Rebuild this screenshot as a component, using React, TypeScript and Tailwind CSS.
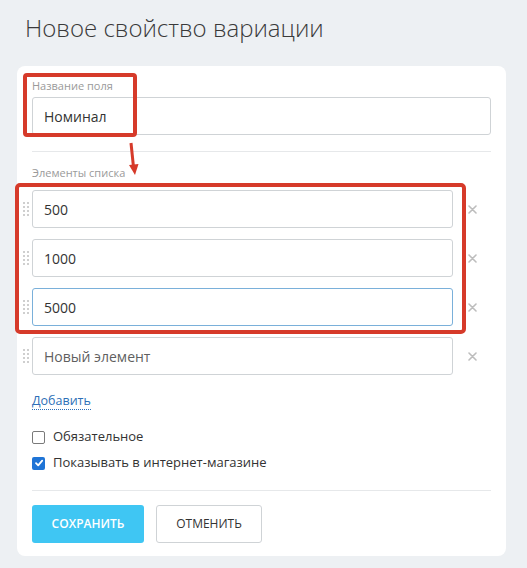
import React from "react";

const font = { fontFamily: '"Open Sans", "Noto Sans", sans-serif' };

function Handle() {
  return (
    <div className="w-[15px] flex justify-center items-center pl-[2px]">
      <div className="grid grid-cols-2 gap-x-[2px] gap-y-[2px]">
        {Array.from({ length: 8 }).map((_, i) => (
          <span key={i} className="block w-[2px] h-[2px] bg-[#cfcfcf]" />
        ))}
      </div>
    </div>
  );
}

function XIcon() {
  return (
    <div className="w-[38px] flex justify-center items-center">
      <svg width="9" height="9" viewBox="0 0 9 9">
        <path d="M1 1 L8 8 M8 1 L1 8" stroke="#bdbdbd" strokeWidth="1.6" strokeLinecap="round" />
      </svg>
    </div>
  );
}

function Item({ value, focused, placeholder }: { value?: string; focused?: boolean; placeholder?: string }) {
  return (
    <div className="flex items-stretch ml-[-15px] h-[38px]">
      <Handle />
      <div
        className={
          "flex-1 flex items-center rounded-[3px] border bg-white px-[11px] text-[14px] " +
          (focused ? "border-[#7ab0da]" : "border-[#cfd3d6]")
        }
      >
        {value ? (
          <span className="text-[#333]">{value}</span>
        ) : (
          <span className="text-[#5f5f5f]">{placeholder}</span>
        )}
      </div>
      <XIcon />
    </div>
  );
}

export default function App() {
  return (
    <div className="relative w-[527px] h-[568px] bg-[#edf0f3] overflow-hidden" style={font}>
      <div className="pt-[12px] pl-[25px] text-[24px] leading-[32px] font-light text-[#3a3a3a]">
        Новое свойство вариации
      </div>
      <div className="mt-[22px] ml-[17px] w-[489px] bg-white rounded-[8px] px-[15px] pt-[13px] pb-[13px]">
        <div className="text-[11px] leading-[14px] text-[#9a9a9a]">Название поля</div>
        <div className="mt-[4px] h-[38px] flex items-center rounded-[3px] border border-[#cfd3d6] px-[11px] text-[14px] text-[#333]">
          Номинал
        </div>
        <div className="mt-[16px] h-px bg-[#e6e8ea]" />
        <div className="mt-[14px] text-[11px] leading-[14px] text-[#9a9a9a]">Элементы списка</div>
        <div className="mt-[10px] flex flex-col gap-[11px]">
          <Item value="500" />
          <Item value="1000" />
          <Item value="5000" focused />
          <Item placeholder="Новый элемент" />
        </div>
        <div className="mt-[17px] h-[18px] flex items-center">
          <span className="text-[12.5px] leading-[17px] text-[#2d6fb7] border-b border-dotted border-[#2d6fb7]">
            Добавить
          </span>
        </div>
        <div className="mt-[18px] flex items-center h-[18px] gap-[8px]">
          <span className="w-[13px] h-[13px] rounded-[2px] border border-[#7a7a7a] bg-white" />
          <span className="text-[13px] text-[#333]">Обязательное</span>
        </div>
        <div className="mt-[8px] flex items-center h-[18px] gap-[8px]">
          <span className="w-[13px] h-[13px] rounded-[2px] bg-[#1f74d6] flex items-center justify-center">
            <svg width="10" height="10" viewBox="0 0 10 10">
              <path d="M2 5.2 L4.2 7.4 L8.2 2.6" stroke="white" strokeWidth="1.8" fill="none" strokeLinecap="round" strokeLinejoin="round" />
            </svg>
          </span>
          <span className="text-[13px] text-[#333]">Показывать в интернет-магазине</span>
        </div>
        <div className="mt-[18px] h-px bg-[#e6e8ea]" />
        <div className="mt-[14px] flex gap-[12px]">
          <button className="w-[112px] h-[38px] rounded-[3px] bg-[#3fc6f3] text-white text-[12px] font-semibold">
            СОХРАНИТЬ
          </button>
          <button className="w-[106px] h-[38px] rounded-[3px] border border-[#cfd3d6] bg-white text-[#333] text-[12px] font-medium">
            ОТМЕНИТЬ
          </button>
        </div>
      </div>

      {/* annotation overlays */}
      <div className="absolute left-[23px] top-[73px] w-[114px] h-[64px] border-[4px] border-[#d63a2a] rounded-[4px]" />
      <div className="absolute left-[15px] top-[183px] w-[451px] h-[151px] border-[4px] border-[#d63a2a] rounded-[5px]" />
      <svg className="absolute left-[120px] top-[140px]" width="26" height="40" viewBox="0 0 26 40">
        <path d="M11 3 L13.6 28" stroke="#d63a2a" strokeWidth="3" />
        <path d="M9 25 L15 35 L18.5 24 Z" fill="#d63a2a" />
      </svg>
    </div>
  );
}
